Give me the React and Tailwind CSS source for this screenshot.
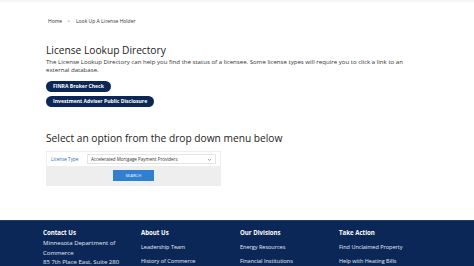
import React from "react";

const font = { fontFamily: '"Open Sans", "Noto Sans", sans-serif' };

const FooterCol = ({ title, children }) => (
  <div className="flex flex-col">
    <h3 className="text-[6.1px] font-bold leading-[8px] text-white">{title}</h3>
    <div className="mt-[4px] flex flex-col text-[5.5px] leading-[7px] text-white/90">
      {children}
    </div>
  </div>
);

export default function App() {
  return (
    <div className="w-[474px] h-[266px] overflow-hidden bg-white text-[#222]" style={font}>
      <div className="h-[3px] bg-gradient-to-b from-[#f1f1f1] to-white" />

      {/* breadcrumb */}
      <div className="pl-[48px] pt-[15px] flex items-center gap-[5px] text-[5px] leading-[6px] text-[#333]">
        <span>Home</span>
        <span className="text-[#777]">&gt;</span>
        <span className="ml-[1px]">Look Up A License Holder</span>
      </div>

      <div className="pl-[46px] pt-[19px]">
        <h1 className="text-[10.2px] leading-[14px] text-[#222]">License Lookup Directory</h1>
        <p className="mt-[1px] w-[370px] text-[6.1px] leading-[8px] text-[#333]">
          The License Lookup Directory can help you find the status of a licensee. Some license types will require you to click a link to an external database.
        </p>

        <div className="mt-[7px] flex flex-col items-start gap-[4px]">
          <button className="h-[11px] px-[7px] rounded-full bg-[#0c2756] text-white text-[5.1px] font-bold leading-none">
            FINRA Broker Check
          </button>
          <button className="h-[11px] px-[7px] rounded-full bg-[#0c2756] text-white text-[5.1px] font-bold leading-none">
            Investment Adviser Public Disclosure
          </button>
        </div>

        <h2 className="mt-[24px] text-[10.2px] leading-[14px] text-[#222]">
          Select an option from the drop down menu below
        </h2>

        <div className="mt-[6px] w-[175px] border border-[#eee]">
          <div className="flex items-center h-[14px] px-[4px] bg-white">
            <span className="w-[36px] text-[4.6px] text-[#2b6cb0]">License Type</span>
            <div className="flex-1 flex items-center justify-between h-[10px] px-[3px] border border-[#e5e5e5] text-[4.5px] text-[#333]">
              <span>Accelerated Mortgage Payment Providers</span>
              <svg width="5" height="5" viewBox="0 0 10 10" fill="none" stroke="#777" strokeWidth="1.4">
                <path d="M2 4l3 3 3-3" />
              </svg>
            </div>
          </div>
          <div className="h-[19px] bg-[#eeeeee] flex items-center justify-center">
            <button className="w-[41px] h-[11px] bg-[#2f80d0] text-white text-[4.3px] leading-none">
              SEARCH
            </button>
          </div>
        </div>
      </div>

      {/* footer */}
      <footer className="mt-[34px] h-[60px] bg-[#0a2757] border-t border-[#1c3a6a] pt-[8px] pl-[43px] grid grid-cols-[98px_99px_99px_100px]">
        <FooterCol title="Contact Us">
          <span className="-mt-[2px] text-[6px] leading-[9.5px]">Minnesota Department of</span>
          <span className="text-[6px] leading-[9.5px]">Commerce</span>
          <span className="text-[6px] leading-[9.5px]">85 7th Place East, Suite 280</span>
        </FooterCol>
        <FooterCol title="About Us">
          <span className="mt-[3px]">Leadership Team</span>
          <span className="mt-[7px]">History of Commerce</span>
        </FooterCol>
        <FooterCol title="Our Divisions">
          <span className="mt-[3px]">Energy Resources</span>
          <span className="mt-[7px]">Financial Institutions</span>
        </FooterCol>
        <FooterCol title="Take Action">
          <span className="mt-[3px]">Find Unclaimed Property</span>
          <span className="mt-[7px]">Help with Heating Bills</span>
        </FooterCol>
      </footer>
    </div>
  );
}
